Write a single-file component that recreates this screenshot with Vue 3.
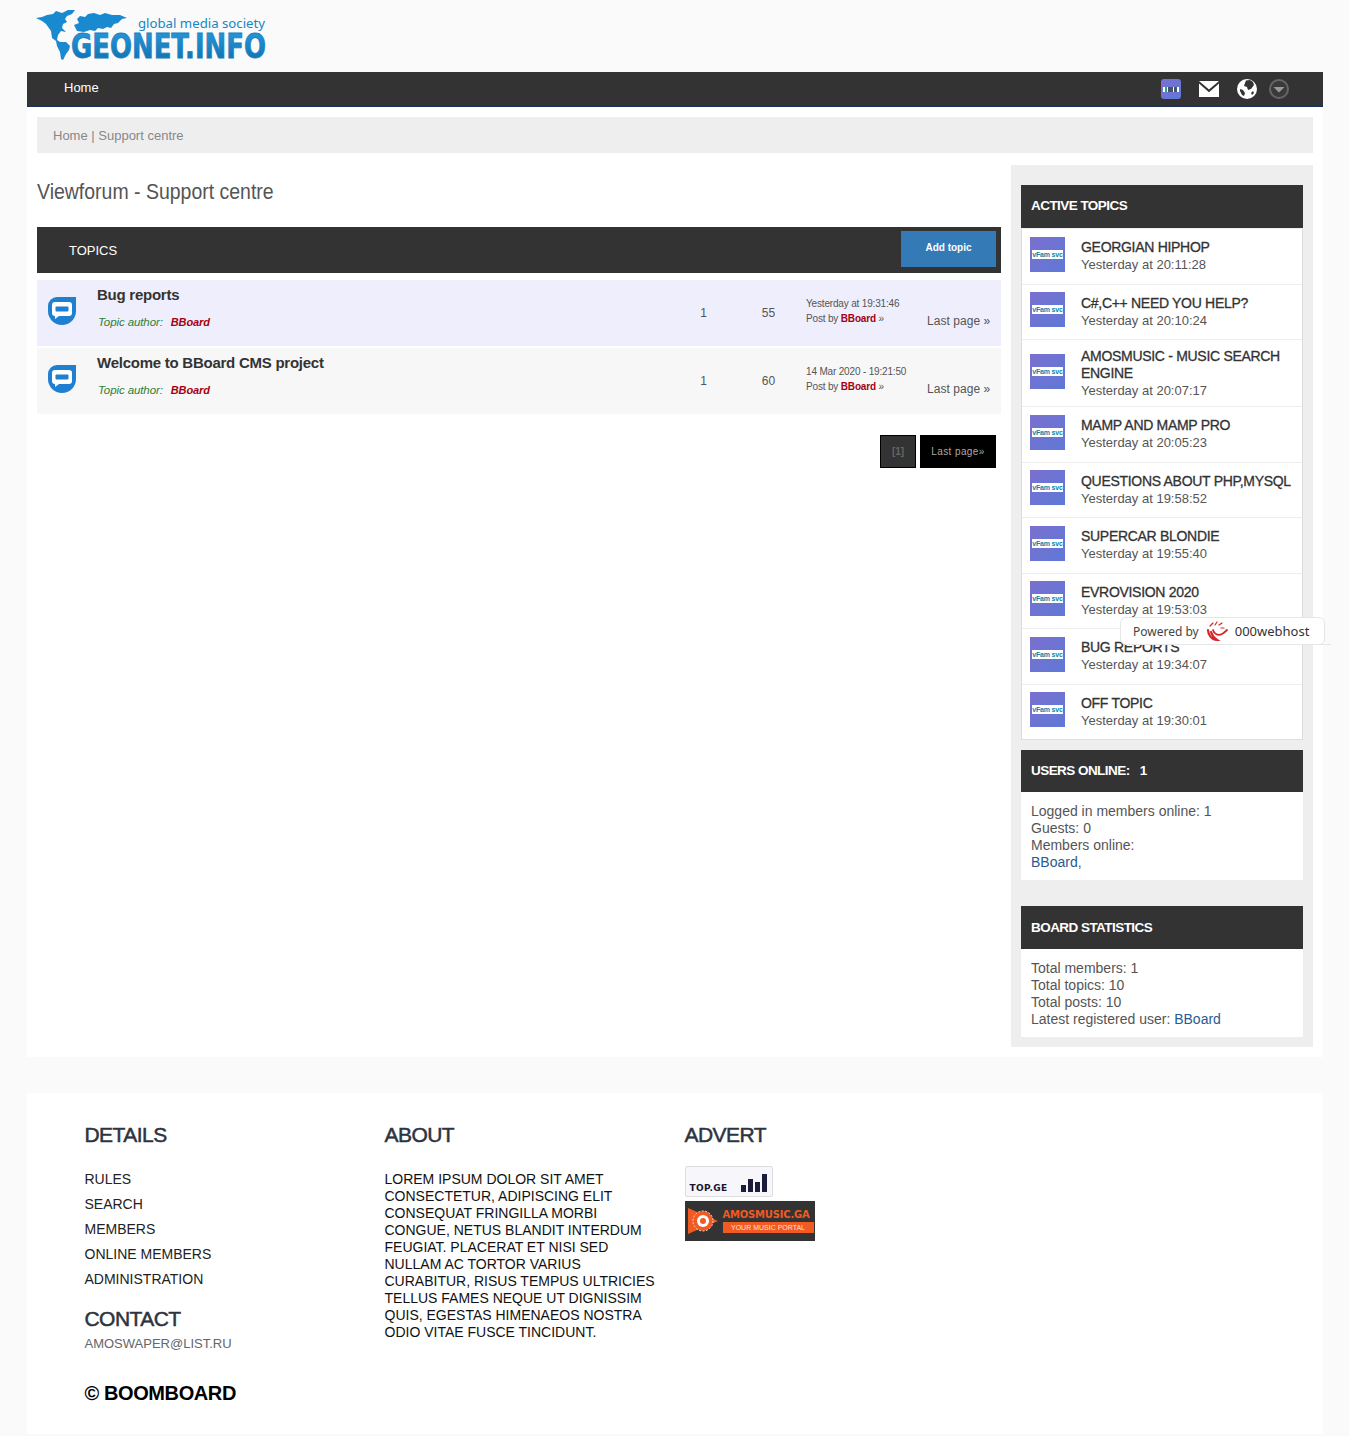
<script setup>
const topics = [
  { title: 'Bug reports', date: 'Yesterday at 19:31:46', replies: 1, views: 55, tone: 'blue' },
  { title: 'Welcome to BBoard CMS project', date: '14 Mar 2020 - 19:21:50', replies: 1, views: 60, tone: 'grey' }
]
const active = [
  { t: 'GEORGIAN HIPHOP', d: 'Yesterday at 20:11:28' },
  { t: 'C#,C++ NEED YOU HELP?', d: 'Yesterday at 20:10:24' },
  { t: 'AMOSMUSIC - MUSIC SEARCH ENGINE', d: 'Yesterday at 20:07:17' },
  { t: 'MAMP AND MAMP PRO', d: 'Yesterday at 20:05:23' },
  { t: 'QUESTIONS ABOUT PHP,MYSQL', d: 'Yesterday at 19:58:52' },
  { t: 'SUPERCAR BLONDIE', d: 'Yesterday at 19:55:40' },
  { t: 'EVROVISION 2020', d: 'Yesterday at 19:53:03' },
  { t: 'BUG REPORTS', d: 'Yesterday at 19:34:07' },
  { t: 'OFF TOPIC', d: 'Yesterday at 19:30:01' }
]
const links = ['RULES', 'SEARCH', 'MEMBERS', 'ONLINE MEMBERS', 'ADMINISTRATION']
</script>

<template>
  <div class="page">
    <header class="logo">
      <svg width="420" height="72" viewBox="0 0 420 72">
        <defs>
          <linearGradient id="lg" x1="0" y1="0" x2="0" y2="1">
            <stop offset="0" stop-color="#2a9ddf" />
            <stop offset="1" stop-color="#0b6dab" />
          </linearGradient>
        </defs>
        <path fill="#1a8ad0" d="M36 18 42 17 47 15 53 14 56 11 62 13 68 10 75 10 72 14 67 16 65 19 67 22 63 24 62 28 66 32 61 31 58 35 57 40 60 42 66 42 70 46 69 50 66 54 63 60 61 59 60 52 57 46 56 41 52 38 51 31 46 24 42 21Z" />
        <path fill="#1a8ad0" d="M77 19 80 16 85 17 88 14 94 13 100 15 105 13 112 15 120 15 127 18 122 19 118 23 114 24 111 28 107 27 103 29 98 28 95 31 90 30 84 32 77 31 74 25 79 23Z" />
        <text x="138" y="28" textLength="127" lengthAdjust="spacingAndGlyphs" class="tag">global media society</text>
        <text x="71" y="58" textLength="195" lengthAdjust="spacingAndGlyphs" class="brand" fill="url(#lg)" stroke="#1480c2" stroke-width=".8">GEONET.INFO</text>
      </svg>
    </header>

    <nav class="nav">
      <a class="nav-home">Home</a>
      <div class="nav-icons">
        <span class="mini-thumb"><i></i></span>
        <svg width="20" height="16" viewBox="0 0 20 16"><path fill="#fff" d="M0 0h20L10 8.6zM0 2.600v13.400h20V2.600L10 11.200z" /></svg>
        <svg width="20" height="20" viewBox="0 0 20 20"><circle cx="10" cy="10" r="10" fill="#fff" /><path fill="#333" d="M9 1.500l4-.5 3 2 1 3-3 4-3 1-1-3-3-1 1-3zM3 10l3 1 2 3-1 3-2-1-2-4zM16 12l1 2-2 2-1-2z" /></svg>
        <svg width="20" height="20" viewBox="0 0 20 20"><circle cx="10" cy="10" r="9" fill="#3a3a3a" stroke="#666" stroke-width="2" /><path fill="#999" d="M4.500 8h11L10 13.500z" /></svg>
      </div>
    </nav>

    <div class="content">
      <div class="crumbs">Home | Support centre</div>
      <div class="columns">
        <main class="main">
          <h1 class="title">Viewforum - Support centre</h1>
          <div class="bar">
            <span>TOPICS</span>
            <a class="add">Add topic</a>
          </div>
          <div class="rows">
            <div v-for="t in topics" :key="t.title" class="row" :class="t.tone">
              <svg class="bubble" width="30" height="30" viewBox="0 0 30 30">
                <path fill="#1f7fd0" d="M10 1H29V15A14 14 0 0 1 1 15V10A9 9 0 0 1 10 1Z" />
                <path fill="#fff" d="M8 6H22a3 3 0 0 1 3 3v8a3 3 0 0 1-3 3H12l-4 3v-3a3 3 0 0 1-3-3V9a3 3 0 0 1 3-3Z" />
                <rect x="8.500" y="10.500" width="13" height="5" rx="1" fill="#1f7fd0" />
              </svg>
              <div class="topic">
                <a class="topic-title">{{ t.title }}</a>
                <div class="author"><em>Topic author:</em><b>BBoard</b></div>
              </div>
              <div class="num">{{ t.replies }}</div>
              <div class="num">{{ t.views }}</div>
              <div class="last">
                <div>{{ t.date }}</div>
                <div>Post by <b>BBoard</b> »</div>
              </div>
              <a class="lastpage">Last page »</a>
            </div>
          </div>
          <div class="pager">
            <span class="cur">[1]</span>
            <span class="next">Last page»</span>
          </div>
        </main>

        <aside class="side">
          <h3 class="side-h first">ACTIVE TOPICS</h3>
          <ul class="active">
            <li v-for="a in active" :key="a.t">
              <span class="thumb"><i>vFam svc</i></span>
              <div class="a-text">
                <div class="a-title">{{ a.t }}</div>
                <div class="a-date">{{ a.d }}</div>
              </div>
            </li>
          </ul>

          <h3 class="side-h online">USERS ONLINE: <b>1</b></h3>
          <div class="side-b online-b">
            <div>Logged in members online: 1</div>
            <div>Guests: 0</div>
            <div>Members online:</div>
            <div><a>BBoard</a>,</div>
          </div>

          <h3 class="side-h stats">BOARD STATISTICS</h3>
          <div class="side-b stats-b">
            <div>Total members: 1</div>
            <div>Total topics: 10</div>
            <div>Total posts: 10</div>
            <div>Latest registered user: <a>BBoard</a></div>
          </div>
        </aside>
      </div>
    </div>

    <footer class="footer">
      <section class="f-col">
        <h4>DETAILS</h4>
        <ul class="f-links"><li v-for="l in links" :key="l">{{ l }}</li></ul>
        <h4 class="contact">CONTACT</h4>
        <div class="mail">AMOSWAPER@LIST.RU</div>
        <div class="copy">© BOOMBOARD</div>
      </section>
      <section class="f-col">
        <h4>ABOUT</h4>
        <p class="about">LOREM IPSUM DOLOR SIT AMET CONSECTETUR, ADIPISCING ELIT CONSEQUAT FRINGILLA MORBI CONGUE, NETUS BLANDIT INTERDUM FEUGIAT. PLACERAT ET NISI SED NULLAM AC TORTOR VARIUS CURABITUR, RISUS TEMPUS ULTRICIES TELLUS FAMES NEQUE UT DIGNISSIM QUIS, EGESTAS HIMENAEOS NOSTRA ODIO VITAE FUSCE TINCIDUNT.</p>
      </section>
      <section class="f-col">
        <h4>ADVERT</h4>
        <div class="ads">
          <div class="ad-top">
            <span>TOP.GE</span>
            <svg width="26" height="20" viewBox="0 0 26 20"><path fill="#1c1c3c" d="M0 12h5v7H0zM7 6h5v13H7zM14 9h5v10h-5zM21 1h5v18h-5z" /></svg>
          </div>
          <div class="ad-music">
            <svg width="30" height="30" viewBox="0 0 30 30"><path fill="#f15a22" d="M0 2 30 15 0 28Z" /><circle cx="15" cy="15" r="10" fill="#f15a22" stroke="#ffd9c7" stroke-dasharray="2 1.500" /><circle cx="15" cy="15" r="6" fill="#fff" /><circle cx="15" cy="15" r="3" fill="#f15a22" /></svg>
            <div class="ad-text">
              <div class="ad-name">AMOSMUSIC.GA</div>
              <div class="ad-sub">YOUR MUSIC PORTAL</div>
            </div>
          </div>
        </div>
      </section>
    </footer>

    <div class="powered">
      <span>Powered by</span>
      <svg width="24" height="22" viewBox="0 0 24 22" fill="none" stroke="#d9252a" stroke-linecap="round"><path stroke-width="2.200" d="M3 10c0 5 4 10 9 10-3-2-5-5-6-8" /><path stroke-width="1.800" d="M8 10c1 4 5 6 9 4 2-1 4-3 5-4" /><path stroke-width="1.200" d="M5 6l3-3M10 5l2-3M14 5l3-2M16 8h3" /></svg>
      <span class="host">000webhost</span>
    </div>
  </div>
</template>

<style>
html, body { margin: 0; background: #fafafa; }
</style>

<style scoped>
.page { position: relative; width: 1349px; height: 1436px; font-family: "Liberation Sans", Arial, sans-serif; color: #444; overflow: hidden; }
ul { list-style: none; margin: 0; padding: 0; }
h1, h3, h4, p { margin: 0; }

.logo { height: 72px; }
.logo svg { display: block; }
.tag { font-family: "Noto Sans", sans-serif; font-size: 12px; fill: #1487c4; }
.brand { font-family: "DejaVu Sans", sans-serif; font-weight: 700; font-size: 34px; }

.nav { margin: 0 26px 0 27px; height: 34px; background: #333; border-bottom: 1px solid #16305a; display: flex; align-items: center; justify-content: space-between; padding: 0 34px 0 37px; }
.nav-home { color: #fff; font-size: 13px; position: relative; top: -2px; }
.nav-icons { display: flex; align-items: center; gap: 18px; }
.nav-icons svg:last-child { margin-left: -6px; }
.mini-thumb { width: 20px; height: 20px; border-radius: 3px; background: linear-gradient(135deg, #7a70cf, #5f78d6); display: flex; align-items: center; padding: 0 2px; box-sizing: border-box; }
.mini-thumb i { display: block; width: 100%; height: 5px; background: linear-gradient(90deg, #fff 12%, #2a7 12%, #2a7 22%, #fff 22%, #fff 30%, #456 30%, #456 60%, #fff 60%, #fff 68%, #456 68%, #456 88%, #fff 88%); }

.content { margin: 0 26px 0 27px; background: #fff; padding: 10px 10px; height: 930px; }
.crumbs { height: 36px; background: #eee; color: #888; font-size: 13px; line-height: 37px; padding-left: 16px; }
.columns { display: flex; gap: 10px; margin-top: 12px; }
.main { width: 964px; }
.title { font-weight: 400; font-size: 22px; line-height: 26px; color: #555; margin-top: 14px; white-space: nowrap; transform: scaleX(.885); transform-origin: left center; }
.bar { margin-top: 22px; height: 46px; background: #333; color: #fff; font-size: 13px; display: flex; align-items: center; justify-content: space-between; padding: 0 5px 0 32px; }
.add { width: 95px; height: 36px; margin-bottom: 2px; background: #337ab7; color: #fff; font-size: 10px; font-weight: 700; text-align: center; line-height: 33px; }
.rows { margin-top: 7px; display: flex; flex-direction: column; gap: 2px; }
.row { height: 66px; display: grid; grid-template-columns: 60px 574px 65px 65px 126px 74px; align-items: stretch; }
.row.blue { background: #eeeefc; }
.row.grey { background: #f7f7f7; }
.bubble { align-self: center; margin: 0 0 4px 10px; }
.topic-title { display: block; margin-top: 6px; font-size: 15px; font-weight: 700; color: #333; line-height: 18px; letter-spacing: -.25px; }
.author { margin-top: 10px; padding-left: 1px; font-size: 11.500px; line-height: 16px; display: flex; gap: 8px; }
.author em { color: #2e7d32; letter-spacing: -.1px; }
.author b { color: #a50014; font-style: italic; font-size: 11px; letter-spacing: -.1px; }
.num { font-size: 12px; color: #555; text-align: center; line-height: 66px; }
.last { padding: 16px 0 0 5px; font-size: 10px; line-height: 15px; color: #555; letter-spacing: -.17px; }
.last b { color: #a50014; }
.lastpage { font-size: 12px; color: #555; line-height: 16px; padding-top: 33px; white-space: nowrap; letter-spacing: .05px; }
.pager { display: flex; justify-content: flex-end; gap: 4px; margin-top: 21px; padding-right: 5px; font-size: 10px; }
.pager span { height: 31px; line-height: 31px; text-align: center; border: 1px solid #000; }
.cur { width: 34px; background: #333; color: #666; font-weight: 700; }
.next { width: 74px; background: #000; color: #aaa; letter-spacing: .4px; }

.side { width: 282px; height: 852px; background: #eee; padding: 20px 10px 10px; }
.side-h { background: #333; color: #fff; font-size: 13.500px; font-weight: 700; padding-left: 10px; letter-spacing: -.55px; }
.side-h.first { height: 43px; line-height: 42px; }
.side-h.online { height: 42px; line-height: 42px; margin-top: 10px; }
.side-h.online b { margin-left: 7px; }
.side-h.stats { height: 43px; line-height: 43px; margin-top: 26px; }
.active { background: #fff; border: 1px solid #ddd; border-top: 0; margin-top: 1px; }
.active li { display: flex; align-items: center; gap: 16px; padding: 7.500px 8px; border-bottom: 1px solid #eee; min-height: 39.500px; }
.active li:last-child { border-bottom: 0; }
.thumb { flex: 0 0 35px; width: 35px; height: 35px; margin-bottom: 4px; background: linear-gradient(135deg, #7a70cf, #5f78d6); display: flex; align-items: center; padding: 0 2px; box-sizing: border-box; overflow: hidden; }
.thumb i { display: block; flex: 1; min-width: 0; height: 9px; background: #fff; color: #0a86a8; font: 700 7px/9px "Liberation Sans", sans-serif; letter-spacing: -.2px; text-align: center; white-space: nowrap; overflow: hidden; }
.a-title { font-size: 14px; line-height: 17px; color: #333; letter-spacing: -.3px; -webkit-text-stroke: .3px #333; }
.a-date { font-size: 13px; line-height: 17px; color: #555; }
.side-b { background: #fff; font-size: 14px; line-height: 17px; color: #555; padding: 0 10px; }
.side-b a { color: #2a5a94; }
.online-b { height: 77px; padding-top: 11px; }
.stats-b { height: 77px; padding-top: 11px; }

.footer { margin: 36px 26px 0 27px; height: 341px; background: #fff; display: flex; padding-left: 57.500px; }
.f-col { width: 300px; }
.f-col h4 { margin-top: 29px; font-size: 21px; line-height: 26px; color: #2d3440; font-weight: 400; -webkit-text-stroke: .5px #2d3440; letter-spacing: -.55px; }
.f-links { margin-top: 19px; font-size: 14px; line-height: 25px; color: #222; }
.f-col h4.contact { margin-top: 14px; }
.mail { margin-top: 3px; font-size: 13px; color: #666; line-height: 17px; }
.copy { margin-top: 29px; font-size: 20px; font-weight: 700; color: #000; line-height: 24px; letter-spacing: -.4px; }
.about { margin-top: 23px; width: 275px; font-size: 14px; line-height: 17px; color: #111; }
.ads { margin-top: 18px; }
.ad-top { width: 88px; height: 31px; box-sizing: border-box; border: 1px solid #ddd; border-radius: 2px; background: #f7f7fb; display: flex; align-items: flex-end; justify-content: space-between; padding: 0 5px 3px 4px; }
.ad-top span { font-family: "DejaVu Sans", sans-serif; font-size: 9px; font-weight: 700; color: #15152f; letter-spacing: .4px; }
.ad-music { margin-top: 4px; width: 130px; height: 40px; background: #333; display: flex; align-items: center; gap: 5px; padding-left: 3px; box-sizing: border-box; }
.ad-name { font-family: "DejaVu Sans", sans-serif; font-size: 10px; font-weight: 700; color: #f15a22; letter-spacing: -.2px; }
.ad-sub { background: #f15a22; color: #ffe0d0; font-size: 7px; width: 91px; text-align: center; line-height: 11px; margin-top: 2px; }

.powered { position: absolute; left: 1120px; top: 617px; width: 205px; height: 28px; box-sizing: border-box; background: #fff; border: 1px solid #e6e6e6; border-radius: 6px; display: flex; align-items: center; padding-left: 12px; gap: 6px; font-family: "Noto Sans", sans-serif; font-size: 12px; color: #444; }
.powered::after { content: ""; position: absolute; left: 198px; bottom: -1px; width: 12px; height: 1px; background: #e6e6e6; }
.powered .host { font-size: 13px; color: #333; }
</style>
